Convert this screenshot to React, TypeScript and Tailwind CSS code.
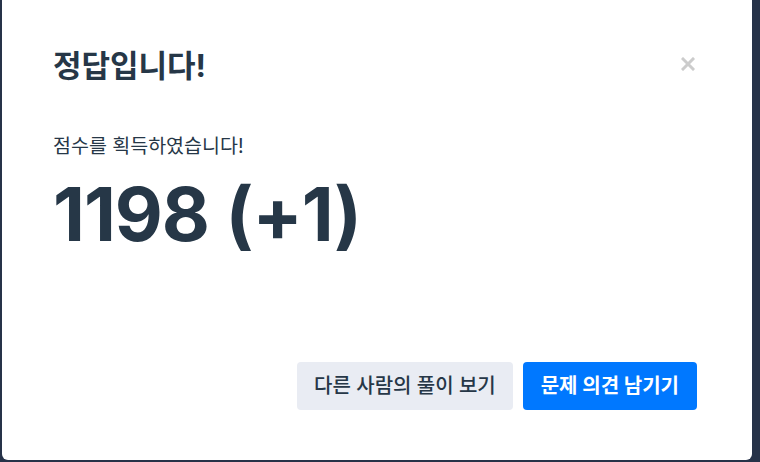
export default function App() {
  return (
    <div
      className="h-[462px] w-[760px] overflow-hidden bg-[#263248]"
      style={{ fontFamily: 'Inter, "Noto Sans CJK KR", sans-serif' }}
    >
      <div className="ml-[2px] flex h-[460px] w-[750px] flex-col rounded-b-md bg-white pl-[51px] pr-[55px]">
        <header className="flex items-start justify-between pt-[44px]">
          <h2 className="text-[31px] font-bold leading-[44px] text-[#263747]">
            정답입니다!
          </h2>
          <button className="mt-[10px] -mr-[1px] flex h-[20px] w-[20px] items-center justify-center text-[#cccccc]">
            <svg width="14" height="14" viewBox="0 0 14 14">
              <path
                d="M2 2 L12 12 M12 2 L2 12"
                stroke="currentColor"
                strokeWidth="3"
                strokeLinecap="square"
              />
            </svg>
          </button>
        </header>

        <main className="mt-[44px]">
          <p className="text-[19.5px] leading-[28px] text-[#263747]">
            점수를 획득하였습니다!
          </p>
          <div className="mt-[9px] text-[74px] font-bold leading-[90px] tracking-[-1px] text-[#263747]">
            1198 (+1)
          </div>
        </main>

        <footer className="mt-auto mb-[50px] flex justify-end gap-[10px]">
          <button className="h-[48px] rounded-[4px] bg-[#e9ecf3] px-[17px] text-[20px] font-medium text-[#263747]">
            다른 사람의 풀이 보기
          </button>
          <button className="h-[48px] rounded-[4px] bg-[#0078ff] px-[18px] text-[20px] font-bold text-white">
            문제 의견 남기기
          </button>
        </footer>
      </div>
    </div>
  );
}
